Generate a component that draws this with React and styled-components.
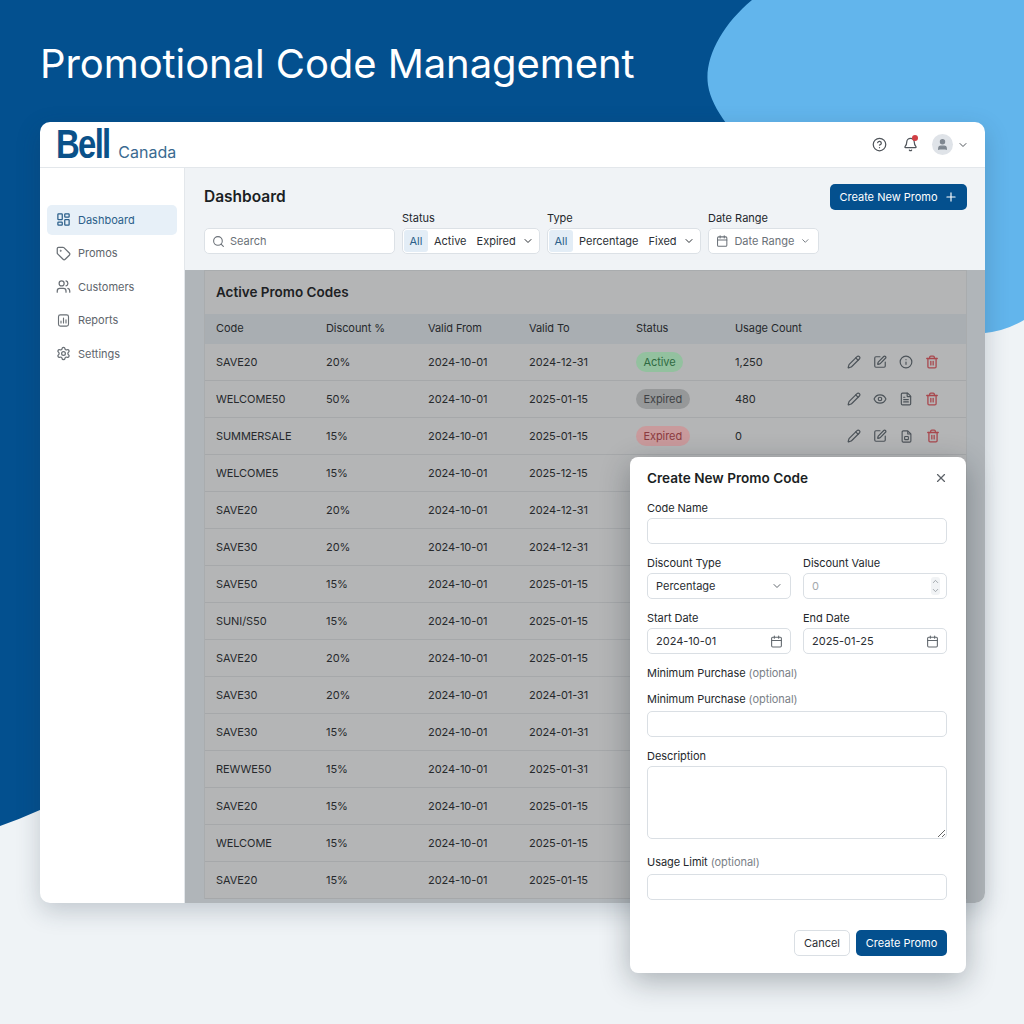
import React from "react";
import styled, { createGlobalStyle } from "styled-components";
import {
  LayoutDashboard,
  Tag,
  Users,
  Settings,
  Search,
  Calendar,
  ChevronDown,
  ChevronUp,
  Plus,
  CircleHelp,
  Bell,
  User,
  Pencil,
  SquarePen,
  Info,
  Trash2,
  Eye,
  FileText,
  X,
} from "lucide-react";

const GlobalStyle = createGlobalStyle`
  html, body {
    margin: 0;
    padding: 0;
    background: #eff3f6;
    font-family: Inter, "Liberation Sans", sans-serif;
  }
  * {
    box-sizing: border-box;
  }
`;

const Page = styled.div`
  position: relative;
  width: 1024px;
  height: 1024px;
  overflow: hidden;
  padding: 0 39px 0 40px;
`;

const Backdrop = styled.svg`
  position: absolute;
  top: 0;
  left: 0;
`;

const Title = styled.h1`
  position: relative;
  margin: 0;
  height: 122px;
  padding-top: 39px;
  font-size: 40px;
  line-height: 50px;
  font-weight: 400;
  color: #fff;
  letter-spacing: -0.08px;
`;

const Card = styled.div`
  position: relative;
  height: 781px;
  background: #fff;
  border-radius: 10px;
  box-shadow: 0 8px 24px rgba(30, 50, 70, 0.22);
  overflow: hidden;
  display: flex;
  flex-direction: column;
`;

const TopBar = styled.header`
  height: 46px;
  flex: none;
  display: flex;
  align-items: center;
  justify-content: space-between;
  padding: 0 16px;
  border-bottom: 1px solid #e3e7eb;
`;

const Logo = styled.div`
  display: flex;
  align-items: flex-end;
  color: #0a5189;
`;

const LogoMark = styled.span`
  font-family: "Liberation Sans", sans-serif;
  font-weight: 700;
  font-size: 40px;
  line-height: 39px;
  letter-spacing: -2px;
  transform: scaleX(0.82);
  transform-origin: left center;
  margin-right: -3px;
`;

const LogoText = styled.span`
  font-size: 16px;
  line-height: 20px;
  margin-bottom: 2px;
  color: #3a6a90;
`;

const TopActions = styled.div`
  display: flex;
  align-items: center;
  color: #50555b;
`;

const BellWrap = styled.span`
  position: relative;
  display: flex;
  margin: 0 14px 0 16px;

  &::after {
    content: "";
    position: absolute;
    top: -2px;
    right: 0;
    width: 6px;
    height: 6px;
    border-radius: 50%;
    background: #d13f45;
  }
`;

const Avatar = styled.span`
  width: 21px;
  height: 21px;
  border-radius: 50%;
  background: #dfe3e8;
  color: #7f8790;
  display: flex;
  align-items: center;
  justify-content: center;
  margin-right: 4px;
`;

const Body = styled.div`
  flex: 1;
  display: flex;
  min-height: 0;
`;

const Sidebar = styled.nav`
  width: 145px;
  flex: none;
  padding: 37px 7px 0 7px;
  border-right: 1px solid #e3e7eb;
  display: flex;
  flex-direction: column;
  gap: 3.5px;
`;

const NavItem = styled.a`
  height: 30px;
  display: flex;
  align-items: center;
  gap: 7px;
  padding: 0 0 1px 9px;
  border-radius: 5px;
  font-size: 11px;
  color: ${(props) => (props.$active ? "#2b5f8a" : "#5e656c")};
  background: ${(props) => (props.$active ? "#e7f0f8" : "transparent")};

  svg {
    color: ${(props) => (props.$active ? "#2b5f8a" : "#6a7076")};
  }
`;

const Main = styled.main`
  flex: 1;
  min-width: 0;
  display: flex;
  flex-direction: column;
`;

const Toolbar = styled.div`
  height: 102px;
  flex: none;
  background: #f0f3f6;
  padding: 16px 18px 0 19px;
`;

const ToolbarTop = styled.div`
  display: flex;
  align-items: center;
  justify-content: space-between;
  height: 26px;
`;

const PageTitle = styled.h2`
  margin: 0;
  padding-bottom: 2px;
  font-size: 15.5px;
  font-weight: 600;
  color: #1b1f24;
`;

const PrimaryButton = styled.button`
  height: 26px;
  border: 0;
  border-radius: 5px;
  background: #04508e;
  color: #fff;
  font: 400 11px Inter, sans-serif;
  display: flex;
  align-items: center;
  justify-content: center;
  gap: ${(props) => props.$gap || 0}px;
  width: ${(props) => props.$width}px;
`;

const Filters = styled.div`
  display: flex;
  align-items: flex-end;
  gap: 7px;
  margin-top: 2px;
`;

const Filter = styled.div`
  display: flex;
  flex-direction: column;
  gap: 3px;
`;

const FilterLabel = styled.span`
  font-size: 11px;
  line-height: 13px;
  color: #23272c;
`;

const FilterBox = styled.div`
  height: 26px;
  width: ${(props) => props.$width}px;
  background: #fff;
  border: 1px solid #dce1e6;
  border-radius: 5px;
  display: flex;
  align-items: center;
  padding: 0 ${(props) => props.$pad || 1}px;
  font-size: 11px;
  white-space: nowrap;
  color: ${(props) => (props.$muted ? "#6b7178" : "#2c3136")};
`;

const Chip = styled.span`
  width: 24px;
  height: 22px;
  text-align: center;
  background: #e3edf6;
  border-radius: 3px;
  line-height: 22px;
  color: #2b5f8a;
  margin-right: 6px;
`;

const Option = styled.span`
  margin-left: ${(props) => props.$before || 0}px;
  margin-right: ${(props) => props.$gap || 0}px;
`;

const Content = styled.section`
  flex: 1;
  min-height: 0;
  background: #b0b5b9;
  padding: 0 18px 0 19px;
  overflow: hidden;
`;

const Panel = styled.div`
  background: #b4b5b6;
  border: 1px solid #a9acae;
  border-bottom: 0;
`;

const PanelTitle = styled.h3`
  margin: 0;
  height: 43px;
  padding: 0 0 1px 11px;
  font-size: 13.5px;
  font-weight: 600;
  line-height: 42px;
  color: #1d2124;
`;

const Row = styled.div`
  display: grid;
  grid-template-columns: 110px 102px 101px 107px 99px 111.5px 1fr;
  align-items: center;
  height: ${(props) => (props.$head ? "30px" : "37px")};
  padding: 0 0 ${(props) => (props.$head ? "2px" : "0")} 11px;
  font-size: 11px;
  letter-spacing: -0.08px;
  color: #26292c;
  background: ${(props) => (props.$head ? "#a9aeb2" : "transparent")};
  border-bottom: ${(props) => (props.$head ? "0" : "1px solid #a6a8aa")};
`;

const Badge = styled.span`
  justify-self: start;
  height: 20px;
  padding: 0 7.5px;
  border-radius: 10px;
  line-height: 20px;
  background: ${(props) => props.$bg};
  color: ${(props) => props.$fg};
`;

const Actions = styled.div`
  display: flex;
  align-items: center;
  gap: 12px;
  color: #4c5359;

  svg:last-child {
    color: #a8474d;
  }
`;

const Modal = styled.div`
  position: absolute;
  top: 457px;
  left: 630px;
  width: 336px;
  height: 516px;
  background: #fff;
  border-radius: 8px;
  padding: 12px 19px 17px 17px;
  box-shadow: 0 8px 30px rgba(20, 30, 40, 0.32);
  display: flex;
  flex-direction: column;
`;

const ModalHead = styled.div`
  display: flex;
  align-items: center;
  justify-content: space-between;
  height: 18px;
  margin: 0 -1px 14px 0;
  color: #5c6268;
`;

const ModalTitle = styled.h3`
  margin: 0;
  font-size: 13.6px;
  font-weight: 600;
  color: #1b1f24;
`;

const Label = styled.label`
  display: block;
  font-size: 11px;
  letter-spacing: -0.05px;
  line-height: 14px;
  color: #24282c;
  margin-bottom: ${(props) => props.$below ?? 3}px;
`;

const Optional = styled.span`
  color: #7b8187;
`;

const TextInput = styled.input`
  display: block;
  width: 100%;
  height: 26px;
  border: 1px solid #dadfe4;
  border-radius: 5px;
  background: #fff;
  margin-bottom: ${(props) => props.$after ?? 12}px;
  outline: none;
`;

const TextArea = styled.textarea`
  display: block;
  width: 100%;
  height: 73px;
  border: 1px solid #dadfe4;
  border-radius: 5px;
  margin: 0 0 16px;
  outline: none;
`;

const TwoCols = styled.div`
  display: grid;
  grid-template-columns: 144px 144px;
  column-gap: 12px;
  margin-bottom: 12px;
`;

const Control = styled.div`
  height: 26px;
  border: 1px solid #dadfe4;
  border-radius: 5px;
  display: flex;
  align-items: center;
  justify-content: space-between;
  padding: 0 7px 0 8px;
  font-size: 11px;
  color: ${(props) => (props.$muted ? "#a3a8ad" : "#2a2e33")};

  svg {
    color: #62686e;
  }
`;

const Stepper = styled.span`
  display: flex;
  flex-direction: column;
  margin-right: -1px;
  background: #f1f3f5;
  border-radius: 3px;

  svg {
    color: #8b9197;
  }
`;

const Footer = styled.div`
  margin-top: 30px;
  display: flex;
  justify-content: flex-end;
  gap: 6px;
`;

const GhostButton = styled.button`
  width: 56px;
  height: 26px;
  background: #fff;
  border: 1px solid #dadfe4;
  border-radius: 5px;
  font: 400 11px Inter, sans-serif;
  color: #2a2e33;
`;

const rows = [
  { code: "SAVE20", pct: "20%", from: "2024-10-01", to: "2024-12-31", status: "active", usage: "1,250", set: "a" },
  { code: "WELCOME50", pct: "50%", from: "2024-10-01", to: "2025-01-15", status: "expired", usage: "480", set: "b" },
  { code: "SUMMERSALE", pct: "15%", from: "2024-10-01", to: "2025-01-15", status: "failed", usage: "0", set: "c" },
  { code: "WELCOME5", pct: "15%", from: "2024-10-01", to: "2025-12-15" },
  { code: "SAVE20", pct: "20%", from: "2024-10-01", to: "2024-12-31" },
  { code: "SAVE30", pct: "20%", from: "2024-10-01", to: "2024-12-31" },
  { code: "SAVE50", pct: "15%", from: "2024-10-01", to: "2025-01-15" },
  { code: "SUNI/S50", pct: "15%", from: "2024-10-01", to: "2025-01-15" },
  { code: "SAVE20", pct: "20%", from: "2024-10-01", to: "2025-01-15" },
  { code: "SAVE30", pct: "20%", from: "2024-10-01", to: "2024-01-31" },
  { code: "SAVE30", pct: "15%", from: "2024-10-01", to: "2024-01-31" },
  { code: "REWWE50", pct: "15%", from: "2024-10-01", to: "2025-01-31" },
  { code: "SAVE20", pct: "15%", from: "2024-10-01", to: "2025-01-15" },
  { code: "WELCOME", pct: "15%", from: "2024-10-01", to: "2025-01-15" },
  { code: "SAVE20", pct: "15%", from: "2024-10-01", to: "2025-01-15" },
];

const badges = {
  active: { label: "Active", bg: "#93c19f", fg: "#2f6a42" },
  expired: { label: "Expired", bg: "#969899", fg: "#3f4245" },
  failed: { label: "Expired", bg: "#c99a9c", fg: "#8c3b40" },
};

function ReportsIcon() {
  return (
    <svg width="15" height="15" viewBox="0 0 24 24" fill="none" stroke="currentColor" strokeWidth="1.8" strokeLinecap="round">
      <rect x="4" y="3" width="16" height="18" rx="3" />
      <path d="M8 16v-3M12 16V8M16 16v-5" />
    </svg>
  );
}

function FileBoxIcon() {
  return (
    <svg width="15" height="15" viewBox="0 0 24 24" fill="none" stroke="currentColor" strokeWidth="1.8" strokeLinejoin="round">
      <path d="M14 3H7a2 2 0 0 0-2 2v14a2 2 0 0 0 2 2h10a2 2 0 0 0 2-2V8z" />
      <path d="M14 3v5h5" />
      <rect x="9" y="12" width="6" height="5" rx="1" />
    </svg>
  );
}

function RowActions({ set }) {
  return (
    <Actions>
      <Pencil size={14} />
      {set === "b" ? <Eye size={14} /> : <SquarePen size={14} />}
      {set === "a" && <Info size={14} />}
      {set === "b" && <FileText size={14} />}
      {set === "c" && <FileBoxIcon />}
      <Trash2 size={14} strokeWidth={2.2} />
    </Actions>
  );
}

function App() {
  return (
    <Page>
      <GlobalStyle />
      <Backdrop width="1024" height="1024" viewBox="0 0 1024 1024">
        <path d="M0 0H1024V300H985L40 810Q20 819 0 826Z" fill="#03508f" />
        <path d="M752 0C722 25 704 58 708 85C714 125 770 170 820 215C880 270 935 335 985 333Q1006 331 1024 320V0Z" fill="#62b5ec" />
      </Backdrop>
      <Title>Promotional Code Management</Title>
      <Card>
        <TopBar>
          <Logo>
            <LogoMark>Bell</LogoMark>
            <LogoText>Canada</LogoText>
          </Logo>
          <TopActions>
            <CircleHelp size={15} />
            <BellWrap>
              <Bell size={15} />
            </BellWrap>
            <Avatar>
              <User size={13} fill="currentColor" />
            </Avatar>
            <ChevronDown size={12} />
          </TopActions>
        </TopBar>
        <Body>
          <Sidebar>
            <NavItem $active>
              <LayoutDashboard size={15} />
              Dashboard
            </NavItem>
            <NavItem>
              <Tag size={15} />
              Promos
            </NavItem>
            <NavItem>
              <Users size={15} />
              Customers
            </NavItem>
            <NavItem>
              <ReportsIcon />
              Reports
            </NavItem>
            <NavItem>
              <Settings size={15} />
              Settings
            </NavItem>
          </Sidebar>
          <Main>
            <Toolbar>
              <ToolbarTop>
                <PageTitle>Dashboard</PageTitle>
                <PrimaryButton $width={137} $gap={6}>
                  Create New Promo
                  <Plus size={14} />
                </PrimaryButton>
              </ToolbarTop>
              <Filters>
                <FilterBox $width={191} $pad={7} $muted>
                  <Search size={13} />
                  <Option $before={5}>Search</Option>
                </FilterBox>
                <Filter>
                  <FilterLabel>Status</FilterLabel>
                  <FilterBox $width={138}>
                    <Chip>All</Chip>
                    <Option $gap={10}>Active</Option>
                    <Option $gap={6}>Expired</Option>
                    <ChevronDown size={12} />
                  </FilterBox>
                </Filter>
                <Filter>
                  <FilterLabel>Type</FilterLabel>
                  <FilterBox $width={154}>
                    <Chip>All</Chip>
                    <Option $gap={10}>Percentage</Option>
                    <Option $gap={6}>Fixed</Option>
                    <ChevronDown size={12} />
                  </FilterBox>
                </Filter>
                <Filter>
                  <FilterLabel>Date Range</FilterLabel>
                  <FilterBox $width={111} $pad={7} $muted>
                    <Calendar size={14} />
                    <Option $before={6} $gap={6}>Date Range</Option>
                    <ChevronDown size={12} />
                  </FilterBox>
                </Filter>
              </Filters>
            </Toolbar>
            <Content>
              <Panel>
                <PanelTitle>Active Promo Codes</PanelTitle>
                <Row $head>
                  <span>Code</span>
                  <span>Discount %</span>
                  <span>Valid From</span>
                  <span>Valid To</span>
                  <span>Status</span>
                  <span>Usage Count</span>
                </Row>
                {rows.map((row, i) => (
                  <Row key={i}>
                    <span>{row.code}</span>
                    <span>{row.pct}</span>
                    <span>{row.from}</span>
                    <span>{row.to}</span>
                    {row.status && (
                      <Badge $bg={badges[row.status].bg} $fg={badges[row.status].fg}>
                        {badges[row.status].label}
                      </Badge>
                    )}
                    {row.status && <span>{row.usage}</span>}
                    {row.status && <RowActions set={row.set} />}
                  </Row>
                ))}
              </Panel>
            </Content>
          </Main>
        </Body>
      </Card>
      <Modal>
        <ModalHead>
          <ModalTitle>Create New Promo Code</ModalTitle>
          <X size={14} />
        </ModalHead>
        <Label>Code Name</Label>
        <TextInput />
        <TwoCols>
          <div>
            <Label>Discount Type</Label>
            <Control>
              Percentage
              <ChevronDown size={12} />
            </Control>
          </div>
          <div>
            <Label>Discount Value</Label>
            <Control $muted>
              0
              <Stepper>
                <ChevronUp size={9} />
                <ChevronDown size={9} />
              </Stepper>
            </Control>
          </div>
        </TwoCols>
        <TwoCols>
          <div>
            <Label>Start Date</Label>
            <Control>
              2024-10-01
              <Calendar size={13} />
            </Control>
          </div>
          <div>
            <Label>End Date</Label>
            <Control>
              2025-01-25
              <Calendar size={13} />
            </Control>
          </div>
        </TwoCols>
        <Label $below={12}>
          Minimum Purchase <Optional>(optional)</Optional>
        </Label>
        <Label $below={5}>
          Minimum Purchase <Optional>(optional)</Optional>
        </Label>
        <TextInput />
        <Label>Description</Label>
        <TextArea />
        <Label $below={5}>
          Usage Limit <Optional>(optional)</Optional>
        </Label>
        <TextInput $after={0} />
        <Footer>
          <GhostButton>Cancel</GhostButton>
          <PrimaryButton $width={91}>Create Promo</PrimaryButton>
        </Footer>
      </Modal>
    </Page>
  );
}

export default App;
